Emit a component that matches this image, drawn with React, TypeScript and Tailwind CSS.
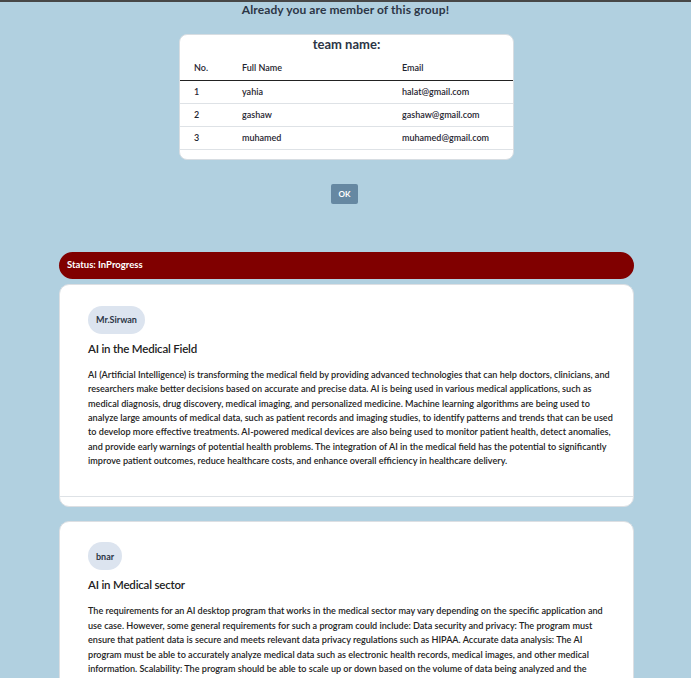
import React from "react";

const members = [
  { no: 1, name: "yahia", email: "halat@gmail.com" },
  { no: 2, name: "gashaw", email: "gashaw@gmail.com" },
  { no: 3, name: "muhamed", email: "muhamed@gmail.com" },
];

const posts = [
  {
    author: "Mr.Sirwan",
    title: "AI in the Medical Field",
    body:
      "AI (Artificial Intelligence) is transforming the medical field by providing advanced technologies that can help doctors, clinicians, and researchers make better decisions based on accurate and precise data. AI is being used in various medical applications, such as medical diagnosis, drug discovery, medical imaging, and personalized medicine. Machine learning algorithms are being used to analyze large amounts of medical data, such as patient records and imaging studies, to identify patterns and trends that can be used to develop more effective treatments. AI-powered medical devices are also being used to monitor patient health, detect anomalies, and provide early warnings of potential health problems. The integration of AI in the medical field has the potential to significantly improve patient outcomes, reduce healthcare costs, and enhance overall efficiency in healthcare delivery.",
  },
  {
    author: "bnar",
    title: "AI in Medical sector",
    body:
      "The requirements for an AI desktop program that works in the medical sector may vary depending on the specific application and use case. However, some general requirements for such a program could include: Data security and privacy: The program must ensure that patient data is secure and meets relevant data privacy regulations such as HIPAA. Accurate data analysis: The AI program must be able to accurately analyze medical data such as electronic health records, medical images, and other medical information. Scalability: The program should be able to scale up or down based on the volume of data being analyzed and the number of users accessing the system. Integration: The program should be able to integrate with existing systems.",
  },
];

export default function App() {
  return (
    <div
      className="h-[678px] overflow-hidden bg-[#b1d0e0] text-[#222]"
      style={{ fontFamily: "Lato, 'Noto Sans', sans-serif" }}
    >
      <div className="h-[2px] bg-[#474747]" />
      <h1 className="text-center text-[12px] font-bold leading-[16px] text-[#2c3646] tracking-[0.1px]">
        Already you are member of this group!
      </h1>

      <div className="mt-[16px] w-[335px] ml-[179px] rounded-[8px] border border-[#d7dde2] bg-white pb-[9px]">
        <div className="text-center text-[13px] font-bold leading-[16px] text-[#2c3646] pt-[1px]">
          team name:
        </div>
        <div className="grid grid-cols-[48px_160px_1fr] pl-[14px] text-[9px] font-semibold text-[#1f2530] h-[29px] items-center pt-[3px] border-b-[1.5px] border-[#222]">
          <span>No.</span>
          <span>Full Name</span>
          <span>Email</span>
        </div>
        {members.map((m) => (
          <div
            key={m.no}
            className="grid grid-cols-[48px_160px_1fr] pl-[14px] text-[9px] font-semibold text-[#1f2530] h-[23px] items-center border-b border-[#dee2e6]"
          >
            <span>{m.no}</span>
            <span>{m.name}</span>
            <span>{m.email}</span>
          </div>
        ))}
      </div>

      <div className="flex justify-center mt-[24px] pr-[2px]">
        <button className="w-[27px] h-[20px] rounded-[2px] bg-[#6688a2] text-white text-[8px] font-bold">
          OK
        </button>
      </div>

      <div className="ml-[59px] w-[575px] mt-[48px]">
        <div className="h-[27px] rounded-[14px] bg-[#800000] flex items-center pl-[8px] text-white text-[9.5px] font-bold">
          Status: InProgress
        </div>

        {posts.map((p, i) => (
          <div
            key={i}
            className={`rounded-[10px] border border-[#dcdfe3] bg-white ${i === 0 ? "mt-[5px]" : "mt-[14px]"}`}
          >
            <div className="pl-[28px] pr-[20px] pt-[20px] pb-[27px]">
              <div className="inline-flex h-[28px] items-center rounded-full bg-[#dce4ef] px-[8px] text-[9px] font-bold text-[#2c3646]">
                {p.author}
              </div>
              <h2 className="mt-[8px] text-[11.5px] font-semibold leading-[14px] text-[#222] tracking-[-0.2px]">
                {p.title}
              </h2>
              <p className="mt-[12px] text-[9.1px] font-semibold leading-[14.4px] text-[#222]">
                {p.body}
              </p>
            </div>
            <div className="h-[10px] border-t border-[#dee2e6]" />
          </div>
        ))}
      </div>
    </div>
  );
}
